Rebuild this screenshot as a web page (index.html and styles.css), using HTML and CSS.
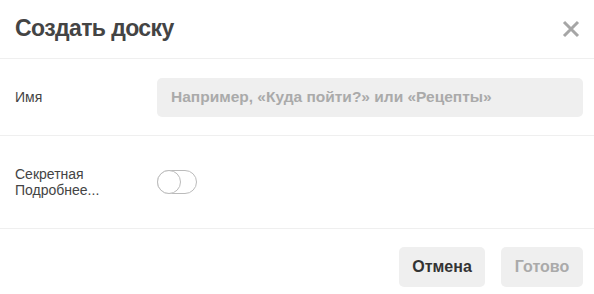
FILE: index.html
```html
<!DOCTYPE html>
<html lang="ru">
<head>
<meta charset="utf-8">
<link rel="stylesheet" href="styles.css">
</head>
<body>
<div class="modal">
  <div class="header">
    <h1 class="title">Создать доску</h1>
    <button class="close" aria-label="Закрыть">
      <svg width="18" height="18" viewBox="0 0 18 18"><path d="M2 2L16 16M16 2L2 16" stroke="#a6a6a6" stroke-width="3" stroke-linecap="butt"/></svg>
    </button>
  </div>
  <div class="row row-name">
    <label class="label">Имя</label>
    <div class="input">Например, «Куда пойти?» или «Рецепты»</div>
  </div>
  <div class="row row-secret">
    <div class="label">Секретная<br>Подробнее...</div>
    <div class="toggle"><span class="knob"></span></div>
  </div>
  <div class="footer">
    <button class="btn btn-cancel">Отмена</button>
    <button class="btn btn-done">Готово</button>
  </div>
</div>
</body>
</html>
```
FILE: styles.css
```css
html, body {
  margin: 0;
  padding: 0;
  background: #fff;
}
body {
  font-family: "Liberation Sans", Arial, sans-serif;
  color: #333;
}
.modal {
  width: 594px;
  height: 294px;
  display: flex;
  flex-direction: column;
}
.header {
  height: 58px;
  border-bottom: 1px solid #efefef;
  display: flex;
  align-items: center;
  justify-content: space-between;
  padding: 0 14px 0 15px;
}
.title {
  margin: 0;
  font-size: 23px;
  font-weight: bold;
  letter-spacing: -0.6px;
  color: #444;
  padding-bottom: 2px;
}
.close {
  border: 0;
  background: none;
  padding: 0;
  width: 18px;
  height: 18px;
  display: flex;
}
.row {
  display: flex;
  align-items: center;
  padding: 0 11px 0 15px;
  border-bottom: 1px solid #efefef;
}
.row-name {
  height: 76px;
}
.row-secret {
  height: 92px;
}
.label {
  width: 142px;
  flex: none;
  font-size: 14px;
  line-height: 16px;
  color: #444;
}
.input {
  flex: 1;
  height: 39px;
  background: #efefef;
  border-radius: 5px;
  display: flex;
  align-items: center;
  padding-left: 14px;
  font-size: 15.5px;
  font-weight: bold;
  color: #aaa;
}
.toggle {
  width: 38px;
  height: 22px;
  border: 1px solid #bbb;
  border-radius: 12px;
  position: relative;
}
.knob {
  position: absolute;
  left: -1px;
  top: -1px;
  width: 22px;
  height: 22px;
  border: 1px solid #bbb;
  border-radius: 50%;
  background: #fff;
}
.footer {
  flex: 1;
  display: flex;
  justify-content: flex-end;
  align-items: flex-start;
  gap: 16px;
  padding: 18px 11px 0 0;
}
.btn {
  border: 0;
  height: 40px;
  border-radius: 5px;
  background: #efefef;
  font-family: "Liberation Sans", Arial, sans-serif;
  font-size: 16px;
  font-weight: bold;
  padding: 0;
}
.btn-cancel {
  width: 86px;
  color: #333;
}
.btn-done {
  width: 82px;
  color: #aaa;
}
```
